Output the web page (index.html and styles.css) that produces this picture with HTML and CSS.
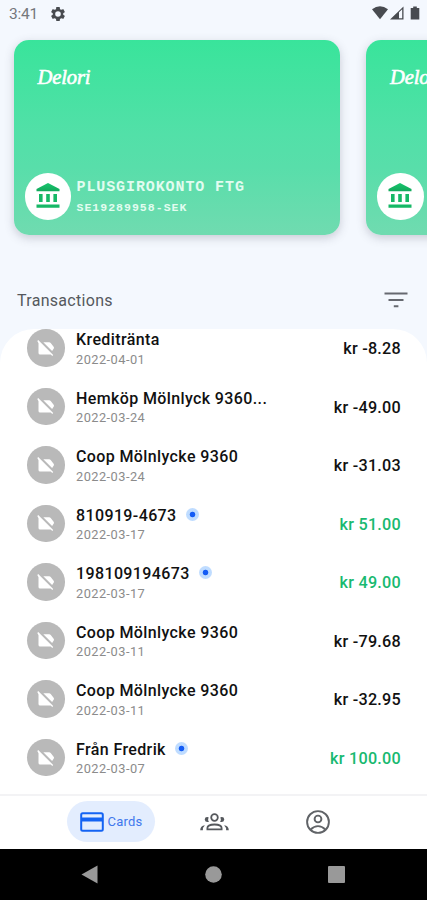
FILE: index.html
```
<!DOCTYPE html>
<html lang="sv">
<head>
<meta charset="utf-8">
<title>Delori</title>
<link rel="stylesheet" href="styles.css">
</head>
<body>
<svg class="defs" width="0" height="0">
  <defs>
    <linearGradient id="roof" x1="0" y1="0" x2="0" y2="1"><stop offset="0" stop-color="#18c66e"/><stop offset="1" stop-color="#12a85b"/></linearGradient>
    <symbol id="bank" viewBox="0 0 24 26"><path fill="url(#roof)" d="M12 0 23.5 6v2.300H.5V6z"/><path fill="#16b866" d="M3 11h3.600v8H3zM10.200 11h3.600v8h-3.600zM17.400 11H21v8h-3.600zM.5 21.500h23v3.200H.5z"/></symbol>
    <symbol id="label-off" viewBox="0 0 18 18"><path fill="#fff" d="M6.300 3.200H12q1.200 0 1.900 1l2.900 3.900q.4.700 0 1.400l-1.700 2.400zM1.200 1 16.200 16 15.300 16.900 13.700 15.400H3.100q-1.600 0-1.600-1.500V4.200L.3 2z"/></symbol>
  </defs>
</svg>
<div class="screen">
  <header class="status">
    <span class="time">3:41</span>
    <svg class="gear" width="14" height="14" viewBox="2 2 20 20"><path d="M19.430 12.980c.04-.32.070-.64.070-.98s-.03-.66-.07-.98l2.110-1.650c.19-.15.240-.42.120-.64l-2-3.460c-.12-.22-.39-.3-.61-.22l-2.490 1c-.52-.4-1.080-.73-1.690-.98l-.38-2.650A.49.490 0 0 0 14 2h-4c-.25 0-.46.180-.49.420l-.38 2.650c-.61.250-1.170.590-1.690.980l-2.490-1c-.23-.09-.49 0-.61.220l-2 3.460c-.13.220-.07.490.120.640l2.110 1.650c-.04.320-.07.650-.07.980s.03.660.070.980l-2.110 1.650c-.19.150-.24.420-.12.640l2 3.460c.12.220.390.300.610.220l2.490-1c.52.400 1.080.730 1.690.980l.38 2.650c.03.240.240.420.490.420h4c.25 0 .46-.18.490-.42l.38-2.650c.61-.25 1.170-.59 1.690-.98l2.490 1c.23.090.490 0 .61-.22l2-3.460c.12-.22.070-.49-.12-.64zM12 16a4 4 0 1 1 0-8 4 4 0 0 1 0 8z"/></svg>
    <svg class="signals" width="49" height="14" viewBox="0 0 49 14"><path d="M0 3.200Q8 -2.600 16 3.200L8 13.200z"/><path d="M18 13.500 31.500.5v13zM27 6.300v6h3.200V3.200z" fill-rule="evenodd"/><path d="M41.200.5h3.600V2h2.500v11.500h-8.600V2h2.500z"/></svg>
  </header>
  <section class="cards">
    <article class="card">
      <div class="brand">Delori</div>
      <div class="account"><span class="badge"><svg width="24" height="26"><use href="#bank"/></svg></span>
        <div><div class="name">PLUSGIROKONTO FTG</div><div class="number">SE19289958-SEK</div></div></div>
    </article>
    <article class="card">
      <div class="brand">Delori</div>
      <div class="account"><span class="badge"><svg width="24" height="26"><use href="#bank"/></svg></span></div>
    </article>
  </section>
  <div class="heading"><h1>Transactions</h1>
    <svg width="24" height="18" viewBox="0 0 24 18"><path d="M.5 2.500h23M4.500 9h15M9.800 15.300h4.600" stroke="#666970" stroke-width="2"/></svg>
  </div>
  <main class="list">
    <div class="row"><span class="avatar"><svg width="18" height="18"><use href="#label-off"/></svg></span><div class="info"><div class="title">Kreditränta</div><div class="date">2022-04-01</div></div><div class="amount">kr -8.28</div></div>
    <div class="row"><span class="avatar"><svg width="18" height="18"><use href="#label-off"/></svg></span><div class="info"><div class="title">Hemköp Mölnlyck 9360...</div><div class="date">2022-03-24</div></div><div class="amount">kr -49.00</div></div>
    <div class="row"><span class="avatar"><svg width="18" height="18"><use href="#label-off"/></svg></span><div class="info"><div class="title">Coop Mölnlycke 9360</div><div class="date">2022-03-24</div></div><div class="amount">kr -31.03</div></div>
    <div class="row"><span class="avatar"><svg width="18" height="18"><use href="#label-off"/></svg></span><div class="info"><div class="title">810919-4673<i class="dot"></i></div><div class="date">2022-03-17</div></div><div class="amount in">kr 51.00</div></div>
    <div class="row"><span class="avatar"><svg width="18" height="18"><use href="#label-off"/></svg></span><div class="info"><div class="title">198109194673<i class="dot"></i></div><div class="date">2022-03-17</div></div><div class="amount in">kr 49.00</div></div>
    <div class="row"><span class="avatar"><svg width="18" height="18"><use href="#label-off"/></svg></span><div class="info"><div class="title">Coop Mölnlycke 9360</div><div class="date">2022-03-11</div></div><div class="amount">kr -79.68</div></div>
    <div class="row"><span class="avatar"><svg width="18" height="18"><use href="#label-off"/></svg></span><div class="info"><div class="title">Coop Mölnlycke 9360</div><div class="date">2022-03-11</div></div><div class="amount">kr -32.95</div></div>
    <div class="row"><span class="avatar"><svg width="18" height="18"><use href="#label-off"/></svg></span><div class="info"><div class="title">Från Fredrik<i class="dot"></i></div><div class="date">2022-03-07</div></div><div class="amount in">kr 100.00</div></div>
  </main>
  <nav class="tabs">
    <div class="tab active"><svg width="24" height="20" viewBox="0 0 24 20"><rect x="1.200" y="1.200" width="21.600" height="17.600" rx="1.500" fill="none" stroke="#1463f3" stroke-width="2"/><path fill="#1463f3" d="M1 5.500h22v4H1z"/></svg><span>Cards</span></div>
    <div class="tab"><svg width="29" height="18" viewBox="0 0 29 18" fill="none" stroke="#55585c" stroke-width="1.800"><circle cx="14.500" cy="4.500" r="3.300"/><path d="M7.400 16.300v-1.200q0-3.600 7.100-3.600t7.100 3.600v1.200z"/><g fill="#55585c" stroke="none"><path d="M8.600 4.300Q5 3.300 4.700 6.500q.5 3.300 4.200 2.400Q7.600 6.500 8.600 4.300zM20.400 4.300q3.600-1 3.900 2.200-.5 3.300-4.200 2.400 1.300-2.400.3-4.600zM4.900 12.200Q.3 12.800.2 17.200h2.700q-.2-3 2-5zM24.100 12.200q4.600.6 4.700 5h-2.700q.2-3-2-5z"/></g></svg></div>
    <div class="tab"><svg width="24" height="24" viewBox="0 0 24 24" fill="none" stroke="#606367" stroke-width="1.900"><circle cx="12" cy="12" r="10.900"/><circle cx="12" cy="9" r="3.400"/><path d="M4.700 19.500Q8 16.100 12 16.100t7.300 3.400"/></svg></div>
  </nav>
  <footer class="system">
    <svg width="17" height="19"><path fill="#999" d="M.5 9.500 16.500.5v18z"/></svg>
    <svg width="17" height="17"><circle cx="8.500" cy="8.500" r="8.300" fill="#999"/></svg>
    <svg width="17" height="17"><rect width="17" height="17" rx="1" fill="#999"/></svg>
  </footer>
</div>
</body>
</html>
```
FILE: styles.css
```
* { box-sizing: border-box; }
body { margin: 0; font-family: Roboto, sans-serif; }
svg { display: block; flex: none; }
.defs { position: absolute; }
.screen { width: 427px; height: 900px; overflow: hidden; display: flex; flex-direction: column; background: #f4f8fe; }
.status { height: 39.500px; flex: none; display: flex; align-items: flex-start; padding: 6px 6px 0 9px; fill: #484b50; }
.time { font-size: 15.500px; line-height: 17px; letter-spacing: -.2px; color: #74777c; width: 42px; }
.gear { margin-top: 1px; }
.signals { margin-left: auto; }
.cards { display: flex; gap: 26px; padding-left: 13.500px; height: 195.500px; flex: none; }
.card { width: 326.500px; flex: none; height: 195.500px; border-radius: 15px; padding: 23.500px 11px 15.500px; display: flex; flex-direction: column; justify-content: space-between; color: #fff; background: linear-gradient(#39e49b, #52e0a8 48%, #58deaa 65%, #70dbb0); box-shadow: 0 3px 10px rgba(70, 70, 90, .25); }
.brand { font: italic 20.500px/28px "Brush Script MT", "Liberation Serif", cursive; -webkit-text-stroke: .6px #fff; padding-left: 13px; letter-spacing: -.1px; }
.account { display: flex; align-items: center; gap: 5.500px; font-family: "Liberation Mono", monospace; font-weight: bold; color: #e2fcf0; white-space: nowrap; }
.badge { width: 46.500px; height: 46.500px; flex: none; border-radius: 50%; background: #fff; display: grid; place-items: center; }
.name { font-size: 15px; line-height: 20px; letter-spacing: .9px; margin-top: 1px; }
.number { font-size: 11.500px; line-height: 16px; letter-spacing: 1.020px; margin-top: 2px; }
.heading { height: 94px; flex: none; display: flex; justify-content: space-between; align-items: flex-start; padding: 55px 19px 0 17px; }
.heading h1 { font-size: 16px; font-weight: 400; line-height: 21px; letter-spacing: .3px; color: #55585d; margin: 0; }
.heading svg { margin-top: 1px; }
.list { height: 465px; flex: none; background: #fff; border-radius: 34px 34px 0 0; padding: 0 26px 0 27px; }
.row { height: 58.550px; display: flex; align-items: flex-start; }
.avatar { width: 37.500px; height: 37.500px; flex: none; border-radius: 50%; background: #b9b9b9; display: grid; place-items: center; }
.info { margin-left: 11.500px; flex: 1; min-width: 0; }
.title { display: flex; align-items: center; font-size: 16px; font-weight: 500; line-height: 21px; letter-spacing: .38px; color: #111; white-space: nowrap; }
.date { font-size: 12.800px; line-height: 17px; letter-spacing: .46px; color: #8b8b8b; margin-top: .5px; }
.amount { font-size: 16.200px; font-weight: 500; line-height: 39px; letter-spacing: .25px; color: #111; white-space: nowrap; }
.in { color: #18b970; }
.dot { width: 13px; height: 13px; margin: -2px 0 0 9.500px; border-radius: 50%; background: radial-gradient(circle, #145cf5 2.400px, #bfdcff 3.200px); }
.tabs { height: 55px; flex: none; border-top: 2px solid #f3f3f5; background: #fff; display: grid; grid-template-columns: 88px 1fr 87px; padding: 5px 66px 0 67px; }
.tab { height: 41px; display: flex; align-items: center; justify-content: center; margin-right: -1px; }
.tab:nth-child(2) { margin-right: 1px; }
.active { border-radius: 21px; background: #e3edfe; gap: 4px; margin: 0; color: #3f78ed; font-size: 13px; letter-spacing: .2px; }
.system { flex: 1; background: #000; display: flex; align-items: center; justify-content: space-between; padding: 0 82px 0 81px; }
```
